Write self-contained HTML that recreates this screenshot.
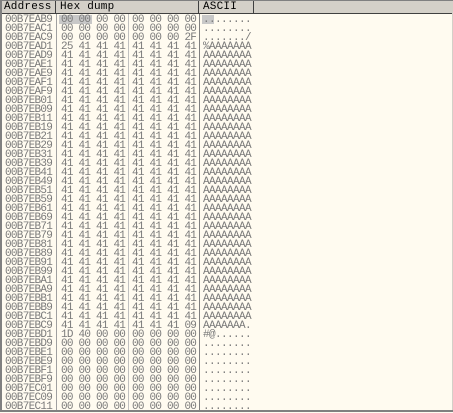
<!DOCTYPE html>
<html><head><style>
html,body{margin:0;padding:0;}
body{width:453px;height:412px;position:relative;overflow:hidden;background:#fffbf0;font-family:"Liberation Mono",monospace;}
.hdr{position:absolute;left:0;top:0;width:453px;height:14px;background:#d4d0c8;border-top:1px solid #808080;border-bottom:1px solid #404040;box-sizing:border-box;}
.ht{position:absolute;top:1px;font-size:11px;line-height:12px;color:#000;letter-spacing:0.2px;}
.vl{position:absolute;width:1px;}
pre{position:absolute;margin:0;top:16px;font-family:"Liberation Mono",monospace;font-size:11px;letter-spacing:-0.77px;line-height:9px;color:#7a7a7a;}
.sel{position:absolute;background:#c8c8c8;}
</style></head><body>
<div class="sel" style="left:59px;top:15px;width:33px;height:9px"></div>
<div class="sel" style="left:202px;top:15px;width:12px;height:9px"></div>
<div class="vl" style="left:56px;top:14px;height:396px;background:#a0a0a0"></div>
<div class="vl" style="left:128px;top:14px;height:396px;background:#c0c0c0"></div>
<div class="vl" style="left:199px;top:14px;height:396px;background:#808080"></div>
<pre style="left:5px;letter-spacing:-0.7px">00B7EAB9
00B7EAC1
00B7EAC9
00B7EAD1
00B7EAD9
00B7EAE1
00B7EAE9
00B7EAF1
00B7EAF9
00B7EB01
00B7EB09
00B7EB11
00B7EB19
00B7EB21
00B7EB29
00B7EB31
00B7EB39
00B7EB41
00B7EB49
00B7EB51
00B7EB59
00B7EB61
00B7EB69
00B7EB71
00B7EB79
00B7EB81
00B7EB89
00B7EB91
00B7EB99
00B7EBA1
00B7EBA9
00B7EBB1
00B7EBB9
00B7EBC1
00B7EBC9
00B7EBD1
00B7EBD9
00B7EBE1
00B7EBE9
00B7EBF1
00B7EBF9
00B7EC01
00B7EC09
00B7EC11</pre>
<pre style="left:61px">00 00 00 00
00 00 00 00
00 00 00 00
25 41 41 41
41 41 41 41
41 41 41 41
41 41 41 41
41 41 41 41
41 41 41 41
41 41 41 41
41 41 41 41
41 41 41 41
41 41 41 41
41 41 41 41
41 41 41 41
41 41 41 41
41 41 41 41
41 41 41 41
41 41 41 41
41 41 41 41
41 41 41 41
41 41 41 41
41 41 41 41
41 41 41 41
41 41 41 41
41 41 41 41
41 41 41 41
41 41 41 41
41 41 41 41
41 41 41 41
41 41 41 41
41 41 41 41
41 41 41 41
41 41 41 41
41 41 41 41
1D 40 00 00
00 00 00 00
00 00 00 00
00 00 00 00
00 00 00 00
00 00 00 00
00 00 00 00
00 00 00 00
00 00 00 00</pre>
<pre style="left:132px">00 00 00 00
00 00 00 00
00 00 00 2F
41 41 41 41
41 41 41 41
41 41 41 41
41 41 41 41
41 41 41 41
41 41 41 41
41 41 41 41
41 41 41 41
41 41 41 41
41 41 41 41
41 41 41 41
41 41 41 41
41 41 41 41
41 41 41 41
41 41 41 41
41 41 41 41
41 41 41 41
41 41 41 41
41 41 41 41
41 41 41 41
41 41 41 41
41 41 41 41
41 41 41 41
41 41 41 41
41 41 41 41
41 41 41 41
41 41 41 41
41 41 41 41
41 41 41 41
41 41 41 41
41 41 41 41
41 41 41 09
00 00 00 00
00 00 00 00
00 00 00 00
00 00 00 00
00 00 00 00
00 00 00 00
00 00 00 00
00 00 00 00
00 00 00 00</pre>
<pre style="left:203px;letter-spacing:-0.6px">........
........
......./
%AAAAAAA
AAAAAAAA
AAAAAAAA
AAAAAAAA
AAAAAAAA
AAAAAAAA
AAAAAAAA
AAAAAAAA
AAAAAAAA
AAAAAAAA
AAAAAAAA
AAAAAAAA
AAAAAAAA
AAAAAAAA
AAAAAAAA
AAAAAAAA
AAAAAAAA
AAAAAAAA
AAAAAAAA
AAAAAAAA
AAAAAAAA
AAAAAAAA
AAAAAAAA
AAAAAAAA
AAAAAAAA
AAAAAAAA
AAAAAAAA
AAAAAAAA
AAAAAAAA
AAAAAAAA
AAAAAAAA
AAAAAAA.
#@......
........
........
........
........
........
........
........
........</pre>
<div class="hdr"></div>
<div class="ht" style="left:4px">Address</div>
<div class="ht" style="left:60px">Hex dump</div>
<div class="ht" style="left:203px">ASCII</div>
<div class="vl" style="left:55px;top:1px;height:12px;background:#404040"></div>
<div class="vl" style="left:198px;top:1px;height:12px;background:#404040"></div>
<div class="vl" style="left:253px;top:1px;height:12px;background:#404040"></div>
<div style="position:absolute;left:0;top:0;width:2px;height:412px;background:#808080"></div>
<div style="position:absolute;left:0;top:410px;width:453px;height:2px;background:#808080"></div>
<div style="position:absolute;left:452px;top:13px;width:1px;height:397px;background:#d4d0c8"></div>
</body></html>
